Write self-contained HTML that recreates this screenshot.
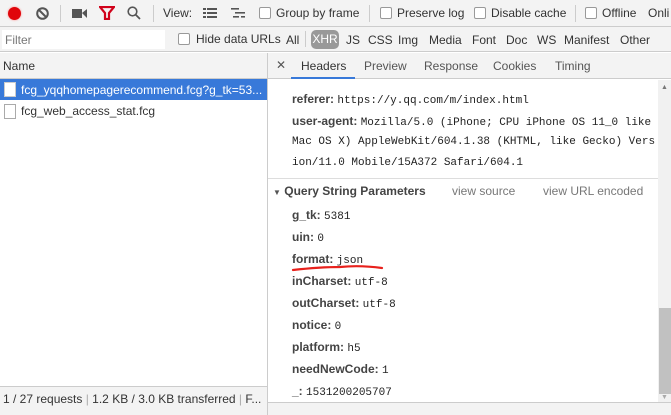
<!DOCTYPE html>
<html><head><meta charset="utf-8"><style>
*{margin:0;padding:0;box-sizing:border-box}
body{width:671px;height:415px;overflow:hidden;background:#fff;font-family:"Liberation Sans",sans-serif;font-size:12px;color:#333;position:relative}
.a{position:absolute;white-space:nowrap}
.cb{position:absolute;width:12px;height:12px;border:1px solid #999;border-radius:2px;background:#fff}
.m{font-family:"Liberation Mono",monospace;font-size:11px;color:#222;font-weight:normal}
.k{font-weight:bold;color:#444;font-size:12px}
.sep{position:absolute;width:1px;background:#ccc}
</style></head><body>
<!-- toolbar -->
<div class="a" style="left:0;top:0;width:671px;height:27px;background:#f3f3f3;border-bottom:1px solid #ccc"></div>
<div class="a" style="left:8px;top:7px;width:13px;height:13px;border-radius:50%;background:#e0060b;box-shadow:0 0 2px #f88"></div>
<svg class="a" style="left:36px;top:7px" width="13" height="13"><circle cx="6.5" cy="6.5" r="5.3" fill="none" stroke="#555" stroke-width="2"/><line x1="3" y1="3" x2="10" y2="10" stroke="#555" stroke-width="2"/></svg>
<div class="sep" style="left:60px;top:5px;height:17px"></div>
<svg class="a" style="left:72px;top:8px" width="16" height="11"><rect x="0" y="1" width="10" height="9" fill="#555"/><path d="M10 5 L15 1 V10 Z" fill="#555"/></svg>
<svg class="a" style="left:99px;top:6px" width="16" height="14"><path d="M1 1 H15 L10 7 V13 H6 V7 Z" fill="none" stroke="#d0021b" stroke-width="2.2"/></svg>
<svg class="a" style="left:127px;top:6px" width="14" height="14"><circle cx="5.5" cy="5.5" r="4.3" fill="none" stroke="#555" stroke-width="1.6"/><line x1="8.5" y1="8.5" x2="13" y2="13" stroke="#555" stroke-width="1.8"/></svg>
<div class="sep" style="left:153px;top:5px;height:17px"></div>
<div class="a" style="left:163px;top:6px;color:#333">View:</div>
<svg class="a" style="left:203px;top:8px" width="14" height="11"><g fill="#555"><rect x="0" y="0" width="3" height="2"/><rect x="4" y="0" width="10" height="2"/><rect x="0" y="4" width="3" height="2"/><rect x="4" y="4" width="10" height="2"/><rect x="0" y="8" width="3" height="2"/><rect x="4" y="8" width="10" height="2"/></g></svg>
<svg class="a" style="left:231px;top:8px" width="15" height="11"><g fill="#555"><rect x="0" y="0" width="8" height="1.6"/><rect x="4" y="4" width="10" height="1.6"/><rect x="2" y="8" width="6" height="1.6"/><rect x="10" y="8" width="4" height="1.6"/></g></svg>
<div class="cb" style="left:259px;top:7px"></div><div class="a" style="left:276px;top:6px">Group by frame</div>
<div class="sep" style="left:369px;top:5px;height:17px"></div>
<div class="cb" style="left:380px;top:7px"></div><div class="a" style="left:397px;top:6px">Preserve log</div>
<div class="cb" style="left:474px;top:7px"></div><div class="a" style="left:491px;top:6px">Disable cache</div>
<div class="sep" style="left:575px;top:5px;height:17px"></div>
<div class="cb" style="left:585px;top:7px"></div><div class="a" style="left:602px;top:6px">Offline</div>
<div class="a" style="left:648px;top:6px">Onli</div>
<!-- filter row -->
<div class="a" style="left:0;top:27px;width:671px;height:25px;background:#f3f3f3;border-bottom:1px solid #ccc"></div>
<div class="a" style="left:2px;top:30px;width:163px;height:19px;background:#fff"></div>
<div class="a" style="left:5px;top:33px;color:#777">Filter</div>
<div class="cb" style="left:178px;top:33px"></div><div class="a" style="left:196px;top:32px">Hide data URLs</div>
<div class="a" style="left:286px;top:33px">All</div>
<div class="sep" style="left:305px;top:31px;height:16px"></div>
<div class="a" style="left:311px;top:30px;width:28px;height:19px;border-radius:5px;background:#999;color:#fff;text-align:center;line-height:19px">XHR</div>
<div class="a" style="left:346px;top:33px">JS</div>
<div class="a" style="left:368px;top:33px">CSS</div>
<div class="a" style="left:398px;top:33px">Img</div>
<div class="a" style="left:429px;top:33px">Media</div>
<div class="a" style="left:472px;top:33px">Font</div>
<div class="a" style="left:506px;top:33px">Doc</div>
<div class="a" style="left:537px;top:33px">WS</div>
<div class="a" style="left:564px;top:33px">Manifest</div>
<div class="a" style="left:620px;top:33px">Other</div>
<!-- left panel -->
<div class="a" style="left:0;top:53px;width:267px;height:26px;background:#f3f3f3;border-bottom:1px solid #ccc"></div>
<div class="a" style="left:3px;top:59px">Name</div>
<div class="a" style="left:0;top:79px;width:267px;height:21px;background:#3879d9"></div>
<div class="a" style="left:4px;top:82px;width:12px;height:15px;background:#fff;border:1px solid #ccc"></div>
<div class="a" style="left:21px;top:83px;color:#fff">fcg_yqqhomepagerecommend.fcg?g_tk=53...</div>
<div class="a" style="left:4px;top:104px;width:12px;height:15px;background:#fff;border:1px solid #aaa"></div>
<div class="a" style="left:21px;top:104px">fcg_web_access_stat.fcg</div>
<div class="a" style="left:0;top:386px;width:267px;height:29px;background:#f3f3f3;border-top:1px solid #ccc"></div>
<div class="a" style="left:3px;top:392px">1 / 27 requests <span style="color:#aaa">|</span> 1.2 KB / 3.0 KB transferred <span style="color:#aaa">|</span> F...</div>
<div class="a" style="left:267px;top:53px;width:1px;height:362px;background:#ccc"></div>
<!-- right tabs -->
<div class="a" style="left:268px;top:53px;width:403px;height:26px;background:#f3f3f3;border-bottom:1px solid #ccc"></div>
<div class="a" style="left:276px;top:58px;color:#555">✕</div>
<div class="a" style="left:301px;top:59px;color:#333">Headers</div>
<div class="a" style="left:291px;top:77px;width:64px;height:2px;background:#3879d9"></div>
<div class="a" style="left:364px;top:59px;color:#555">Preview</div>
<div class="a" style="left:424px;top:59px;color:#555">Response</div>
<div class="a" style="left:493px;top:59px;color:#555">Cookies</div>
<div class="a" style="left:555px;top:59px;color:#555">Timing</div>
<!-- right content -->
<div class="a" style="left:268px;top:80px;width:390px;height:322px;background:#fff"></div>
<div class="a k" style="left:292px;top:92px">referer: <span class="m">https://y.qq.com/m/index.html</span></div>
<div class="a k" style="left:292px;top:114px">user-agent: <span class="m">Mozilla/5.0 (iPhone; CPU iPhone OS 11_0 like</span></div>
<div class="a m" style="left:292px;top:136px">Mac OS X) AppleWebKit/604.1.38 (KHTML, like Gecko) Vers</div>
<div class="a m" style="left:292px;top:157px">ion/11.0 Mobile/15A372 Safari/604.1</div>
<div class="a" style="left:268px;top:178px;width:390px;height:1px;background:#ddd"></div>
<div class="a" style="left:273px;top:184px;font-weight:bold;color:#444"><span style="font-size:8px;color:#555">▼</span> Query String Parameters</div>
<div class="a" style="left:452px;top:184px;color:#777">view source</div>
<div class="a" style="left:543px;top:184px;color:#777">view URL encoded</div>
<div class="a k" style="left:292px;top:208px">g_tk: <span class="m">5381</span></div>
<div class="a k" style="left:292px;top:230px">uin: <span class="m">0</span></div>
<div class="a k" style="left:292px;top:252px">format: <span class="m">json</span></div>
<svg class="a" style="left:290px;top:263px" width="95" height="10"><path d="M3 7 Q30 4 50 4 Q70 2 92 5" fill="none" stroke="#e8211c" stroke-width="2.2" stroke-linecap="round"/></svg>
<div class="a k" style="left:292px;top:274px">inCharset: <span class="m">utf-8</span></div>
<div class="a k" style="left:292px;top:296px">outCharset: <span class="m">utf-8</span></div>
<div class="a k" style="left:292px;top:318px">notice: <span class="m">0</span></div>
<div class="a k" style="left:292px;top:340px">platform: <span class="m">h5</span></div>
<div class="a k" style="left:292px;top:362px">needNewCode: <span class="m">1</span></div>
<div class="a k" style="left:292px;top:384px">_: <span class="m">1531200205707</span></div>
<div class="a" style="left:268px;top:402px;width:403px;height:13px;background:#f3f3f3;border-top:1px solid #ccc"></div>
<!-- scrollbar -->
<div class="a" style="left:658px;top:80px;width:13px;height:322px;background:#f1f1f1"></div>
<div class="a" style="left:661px;top:84px;font-size:7px;color:#777">▲</div>
<div class="a" style="left:659px;top:308px;width:12px;height:86px;background:#c1c1c1"></div>
<div class="a" style="left:661px;top:394px;font-size:7px;color:#aaa">▼</div>
</body></html>
